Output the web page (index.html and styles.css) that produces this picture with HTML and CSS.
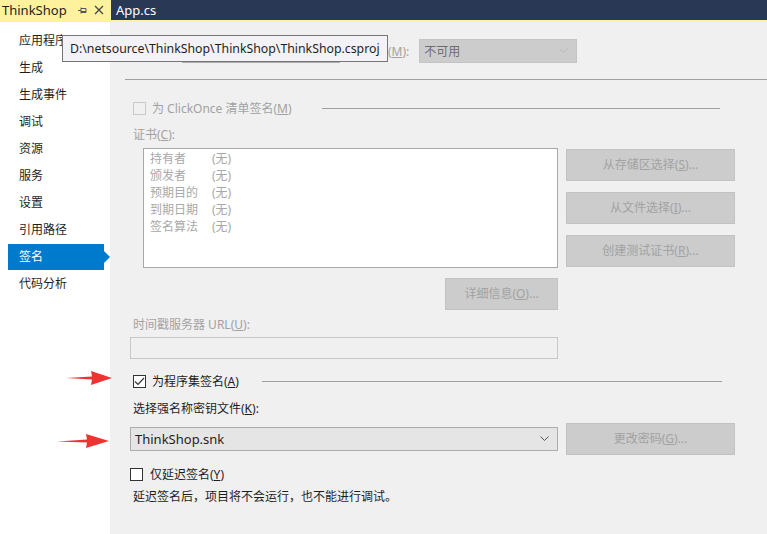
FILE: index.html
```html
<!DOCTYPE html>
<html lang="zh-CN">

<head>
  <meta charset="UTF-8">
  <title>ThinkShop - 签名</title>
  <link rel="stylesheet" href="styles.css">
</head>

<body>
  <!-- 1.标签栏 -->
  <div class="tabs">
    <div class="tab active-tab">ThinkShop
      <svg class="pin" width="9" height="9" viewBox="0 0 9 9"><path d="M0 4.5h3M3 1.5v6M3 2.5h5v4H3M3 5.5h5" stroke="#555" fill="none" /></svg>
      <svg class="close" width="10" height="10" viewBox="0 0 10 10"><path d="M1 1l8 8M9 1l-8 8" stroke="#444" stroke-width="1.3" /></svg>
    </div>
    <div class="tab">App.cs</div>
  </div>

  <div class="main">
    <!-- 2.左侧菜单 -->
    <ul class="menu">
      <li>应用程序</li>
      <li>生成</li>
      <li>生成事件</li>
      <li>调试</li>
      <li>资源</li>
      <li>服务</li>
      <li>设置</li>
      <li>引用路径</li>
      <li class="selected">签名</li>
      <li>代码分析</li>
    </ul>

    <!-- 3.内容 -->
    <div class="content">
      <div class="top-row">
        <div class="hidden-btn"></div>
        <span class="gray-label">(<u>M</u>):</span>
        <div class="select disabled-select">不可用
          <svg width="9" height="6" viewBox="0 0 9 6"><path d="M0.5 0.5l4 4 4-4" stroke="#b8b8b8" fill="none" /></svg>
        </div>
      </div>
      <div class="rule full"></div>

      <div class="check-row disabled">
        <span class="box"></span>
        <span>为 ClickOnce 清单签名(<u>M</u>)</span>
        <span class="line short"></span>
      </div>

      <div class="label disabled">证书(<u>C</u>):</div>
      <div class="cert">
        <div class="cert-list">
          <div class="cert-item"><span>持有者</span>(无)</div>
          <div class="cert-item"><span>颁发者</span>(无)</div>
          <div class="cert-item"><span>预期目的</span>(无)</div>
          <div class="cert-item"><span>到期日期</span>(无)</div>
          <div class="cert-item"><span>签名算法</span>(无)</div>
        </div>
        <div class="cert-btns">
          <div class="btn">从存储区选择(<u>S</u>)...</div>
          <div class="btn">从文件选择(<u>I</u>)...</div>
          <div class="btn">创建测试证书(<u>R</u>)...</div>
        </div>
      </div>
      <div class="btn detail-btn">详细信息(<u>O</u>)...</div>

      <div class="label disabled ts-label">时间戳服务器 URL(<u>U</u>):</div>
      <div class="input"></div>

      <div class="check-row sign-row">
        <span class="box checked">
          <svg width="11" height="9" viewBox="0 0 11 9"><path d="M1 4.5l3 3 6-6.5" stroke="#333" stroke-width="1.2" fill="none" /></svg>
        </span>
        <span>为程序集签名(<u>A</u>)</span>
        <span class="line long"></span>
      </div>

      <div class="label key-label">选择强名称密钥文件(<u>K</u>):</div>
      <div class="key-row">
        <div class="select key-select">ThinkShop.snk
          <svg width="9" height="6" viewBox="0 0 9 6"><path d="M0.5 0.5l4 4 4-4" stroke="#555" fill="none" /></svg>
        </div>
        <div class="btn">更改密码(<u>G</u>)...</div>
      </div>

      <div class="check-row delay-row">
        <span class="box"></span>
        <span>仅延迟签名(<u>Y</u>)</span>
      </div>
      <div class="note">延迟签名后，项目将不会运行，也不能进行调试。</div>
    </div>
  </div>

  <!-- 4.提示 -->
  <div class="tooltip">D:\netsource\ThinkShop\ThinkShop\ThinkShop.csproj</div>

  <!-- 5.红色箭头 -->
  <svg class="arrow arrow1" width="46" height="14" viewBox="0 0 46 14"><path d="M0 7L26 5.5 25 0 46 7 25 14 26 8.5z" fill="#ee3333" /></svg>
  <svg class="arrow arrow2" width="52" height="14" viewBox="0 0 52 14"><path d="M0 7.5L30 5.5 29 0 52 7 29 14 30 8.5z" fill="#ee3333" /></svg>
</body>

</html>
```

FILE: styles.css
```css
* {
  margin: 0;
  padding: 0;
  box-sizing: border-box;
}

body {
  width: 767px;
  height: 534px;
  overflow: hidden;
  background-color: #f0f0f0;
  font-family: "Noto Sans", "Noto Sans CJK SC", sans-serif;
  font-size: 12px;
  color: #1e1e1e;
  position: relative;
}

u {
  text-decoration: underline;
}

/* 标签栏 */
.tabs {
  display: flex;
  height: 22px;
  background-color: #293955;
  border-bottom: 2px solid #fff29d;
}

.tab {
  display: flex;
  align-items: center;
  padding: 0 0 0 5px;
  font-size: 13px;
  color: #fff;
  height: 20px;
}

.active-tab {
  width: 111px;
  padding-left: 2px;
  background-color: #fff29d;
  color: #1e1e1e;
}

.pin {
  margin-left: 11px;
}

.close {
  margin-left: 7px;
}

/* 主体 */
.main {
  display: flex;
  height: 512px;
}

.menu {
  list-style: none;
  width: 110px;
  flex-shrink: 0;
  background-color: #fff;
  padding-top: 6px;
}

.menu li {
  position: relative;
  height: 26px;
  margin: 0 6px 1px 8px;
  padding-left: 11px;
  line-height: 26px;
  font-size: 12px;
  color: #1e1e1e;
}

.menu .selected {
  background-color: #007acc;
  color: #fff;
}

.menu .selected::after {
  content: "";
  position: absolute;
  right: -6px;
  top: 7px;
  border-left: 6px solid #007acc;
  border-top: 6px solid transparent;
  border-bottom: 6px solid transparent;
}

.content {
  flex: 1;
  padding-left: 20px;
}

.disabled {
  color: #a2a2a2;
}

.top-row {
  display: flex;
  align-items: center;
  height: 24px;
  margin-top: 17px;
}

.hidden-btn {
  width: 158px;
  height: 24px;
  margin-left: 52px;
  background-color: #dcdcdc;
  border: 1px solid #adadad;
}

.gray-label {
  margin-left: 48px;
  color: #a2a2a2;
}

.select {
  display: flex;
  align-items: center;
  justify-content: space-between;
  padding: 0 8px 0 4px;
}

.disabled-select {
  width: 158px;
  height: 24px;
  margin-left: 10px;
  background-color: #cccccc;
  border: 1px solid #c4c4c4;
  color: #6d6d6d;
}

.rule {
  height: 1px;
  background-color: #a0a0a0;
}

.full {
  margin: 16px 0 0 -5px;
}

.check-row {
  display: flex;
  align-items: center;
  height: 16px;
  margin-left: 3px;
}

.check-row .box {
  display: flex;
  align-items: center;
  justify-content: center;
  width: 13px;
  height: 13px;
  margin-right: 6px;
  background-color: #fff;
  border: 1px solid #333;
}

.check-row.disabled {
  margin-top: 20px;
}

.check-row.disabled .box {
  border-color: #c8c8c8;
  background-color: #f0f0f0;
}

.line {
  height: 1px;
  background-color: #a0a0a0;
}

.line.short {
  width: 398px;
  margin-left: 30px;
}

.label {
  line-height: 16px;
  margin-left: 3px;
  margin-top: 11px;
}

.cert {
  display: flex;
  align-items: flex-start;
  margin-top: 5px;
  margin-left: 13px;
}

.cert-list {
  width: 415px;
  height: 120px;
  background-color: #fff;
  border: 1px solid #a8a8a8;
  padding: 1px 0 0 6px;
  color: #a8a8a8;
}

.cert-item {
  height: 17px;
  line-height: 17px;
}

.cert-item span {
  display: inline-block;
  width: 62px;
}

.cert-btns {
  display: flex;
  flex-direction: column;
  gap: 11px;
  margin-left: 8px;
  margin-top: 1px;
}

.btn {
  width: 169px;
  height: 32px;
  line-height: 30px;
  text-align: center;
  background-color: #cccccc;
  border: 1px solid #c2c2c2;
  color: #a2a2a2;
}

.detail-btn {
  width: 113px;
  margin: 10px 0 0 315px;
}

.ts-label {
  margin-top: 7px;
}

.input {
  width: 428px;
  height: 22px;
  margin-top: 4px;
  background-color: #f0f0f0;
  border: 1px solid #c8c8c8;
}

.sign-row {
  margin-top: 14px;
}

.line.long {
  width: 460px;
  margin-left: 23px;
}

.key-label {
  margin-top: 12px;
}

.key-row {
  display: flex;
  align-items: center;
  gap: 8px;
  margin-top: 6px;
}

.key-select {
  width: 428px;
  height: 24px;
  background-color: #e5e5e5;
  border: 1px solid #acacac;
  font-size: 13px;
}

.delay-row {
  margin-top: 11px;
  margin-left: 0;
}

.delay-row .box {
  margin-right: 7px;
}

.note {
  margin-top: 7px;
  margin-left: 3px;
  line-height: 16px;
}

/* 提示 */
.tooltip {
  position: absolute;
  left: 62px;
  top: 35px;
  height: 27px;
  padding: 0 7px;
  line-height: 25px;
  font-size: 12.3px;
  background-color: #f3f3f7;
  border: 1px solid #767676;
  color: #1e1e1e;
  white-space: nowrap;
}

/* 箭头 */
.arrow {
  position: absolute;
}

.arrow1 {
  left: 66px;
  top: 371px;
}

.arrow2 {
  left: 57px;
  top: 434px;
}
```
